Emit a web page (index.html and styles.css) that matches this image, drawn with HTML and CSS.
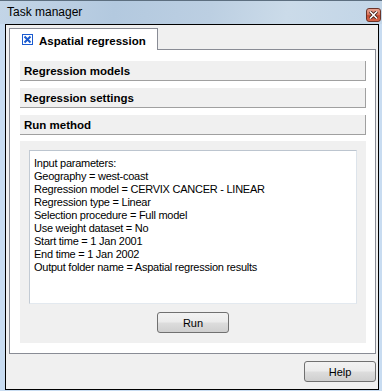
FILE: index.html
```html
<!DOCTYPE html>
<html>
<head>
<meta charset="utf-8">
<link rel="stylesheet" href="styles.css">
</head>
<body>
<div class="window">
  <div class="titlebar">
    <span class="title">Task manager</span>
    <div class="close">
      <svg width="9" height="8" viewBox="0 0 9 8"><path d="M1 0.5 L8 7.5 M8 0.5 L1 7.5" stroke="#3a1a14" stroke-width="3.2"/><path d="M1 0.5 L8 7.5 M8 0.5 L1 7.5" stroke="#fff" stroke-width="1.6"/></svg>
    </div>
  </div>
  <div class="frame">
    <div class="client">
      <div class="tabs">
        <div class="tab">
          <svg class="tab-icon" width="11" height="11" viewBox="0 0 11 11"><rect x="0.5" y="0.5" width="10" height="10" fill="#fff" stroke="#1a5bd0"/><path d="M2.5 2.5 L8.5 8.5 M8.5 2.5 L2.5 8.5" stroke="#1a5bd0" stroke-width="2"/></svg>
          <span class="tab-label">Aspatial regression</span>
        </div>
      </div>
      <div class="panel">
        <div class="section">Regression models</div>
        <div class="section">Regression settings</div>
        <div class="section last">Run method</div>
        <div class="run-area">
          <div class="textbox">
            <div>Input parameters:</div>
            <div>Geography = west-coast</div>
            <div>Regression model = CERVIX CANCER - LINEAR</div>
            <div>Regression type = Linear</div>
            <div>Selection procedure = Full model</div>
            <div>Use weight dataset = No</div>
            <div>Start time = 1 Jan 2001</div>
            <div>End time = 1 Jan 2002</div>
            <div>Output folder name = Aspatial regression results</div>
          </div>
          <div class="run-row"><button class="btn">Run</button></div>
        </div>
      </div>
      <div class="footer"><button class="btn">Help</button></div>
    </div>
  </div>
</div>
</body>
</html>
```
FILE: styles.css
```css
html, body {
  margin: 0;
  padding: 0;
  background: #fff;
}
.window {
  width: 382px;
  height: 391px;
  display: flex;
  flex-direction: column;
  font-family: "Liberation Sans", Arial, sans-serif;
  font-size: 11px;
  color: #000;
}
.titlebar {
  height: 24px;
  box-sizing: border-box;
  border-top: 1px solid #5d6f80;
  background: linear-gradient(100deg, #c3d5e7 0%, #b3c9df 30%, #bccfe2 55%, #cbdbe9 75%, #c2d5e7 100%);
  display: flex;
  align-items: flex-start;
  justify-content: space-between;
}
.title {
  font-size: 12px;
  margin: 4px 0 0 7px;
  color: #000;
}
.close {
  width: 15px;
  height: 14px;
  box-sizing: border-box;
  margin: 7px 1px 0 0;
  border: 1px solid #6b3328;
  border-radius: 3px;
  background: linear-gradient(#e9a492 0%, #d9775f 45%, #c44a30 55%, #d4654a 100%);
  display: flex;
  align-items: center;
  justify-content: center;
}
.frame {
  flex: 1;
  display: flex;
  padding: 0 3px 1px 5px;
  background: #c8dcf1;
}
.client {
  flex: 1;
  border: 1px solid #000;
  background: #f0f0f0;
  display: flex;
  flex-direction: column;
  padding: 3px 2px 0 3px;
}
.tabs {
  display: flex;
  height: 21px;
}
.tab {
  width: 149px;
  box-sizing: border-box;
  height: 22px;
  border: 1px solid #898c95;
  border-bottom: none;
  background: #fff;
  display: flex;
  align-items: center;
  padding: 0 0 0 12px;
  position: relative;
  z-index: 1;
}
.tab-icon {
  margin-right: 6px;
  flex: none;
}
.tab-label {
  font-weight: bold;
  font-size: 11.5px;
  padding-top: 2px;
}
.panel {
  border: 1px solid #898c95;
  background: #fff;
  padding: 11px 9px 10px 10px;
  display: flex;
  flex-direction: column;
}
.section {
  height: 20px;
  box-sizing: border-box;
  background: #f0f0f0;
  border-right: 1px solid #a0a0a0;
  border-bottom: 1px solid #a0a0a0;
  font-weight: bold;
  font-size: 11.5px;
  padding: 4px 0 0 4px;
  margin-bottom: 7px;
}
.section.last {
  margin-bottom: 6px;
}
.run-area {
  background: #f0f0f0;
  padding: 9px 9px 10px 9px;
  display: flex;
  flex-direction: column;
}
.textbox {
  height: 154px;
  box-sizing: border-box;
  background: #fff;
  border: 1px solid;
  border-color: #bcc5cf #dde4eb #e3e9ef #c3cbd4;
  padding: 6px 4px;
  line-height: 13px;
  font-size: 11px;
  letter-spacing: -0.25px;
}
.run-row {
  display: flex;
  justify-content: center;
  padding-top: 8px;
}
.btn {
  width: 72px;
  height: 21px;
  box-sizing: border-box;
  border: 1px solid #707070;
  border-radius: 3px;
  background: linear-gradient(#f2f2f2 0%, #ebebeb 48%, #dddddd 52%, #cfcfcf 100%);
  font-family: "Liberation Sans", Arial, sans-serif;
  font-size: 11px;
  color: #000;
  padding: 0;
  margin: 0;
}
.footer {
  flex: 1;
  display: flex;
  justify-content: flex-end;
  align-items: flex-start;
  padding: 7px 0 0 0;
}
```
